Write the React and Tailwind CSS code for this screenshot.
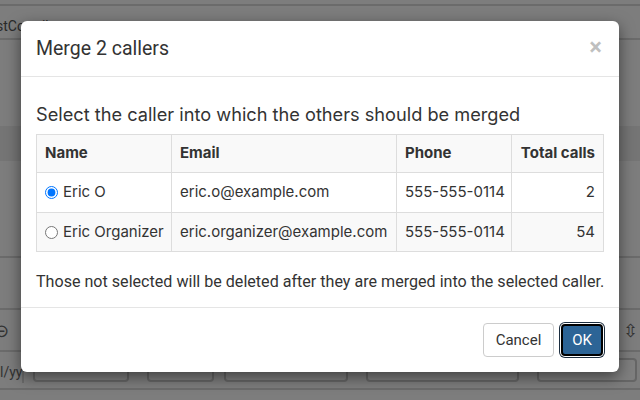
import React, { useState } from "react";

const callers = [
  { id: 1, name: "Eric O", email: "eric.o@example.com", phone: "555-555-0114", calls: 2 },
  { id: 2, name: "Eric Organizer", email: "eric.organizer@example.com", phone: "555-555-0114", calls: 54 },
];

const inter = "font-['Inter','Liberation_Sans',sans-serif]";
const roboto = "font-['Roboto','Liberation_Sans',sans-serif]";

function BackgroundPage() {
  // the page behind the dialog, mostly hidden by the overlay
  return (
    <div className={`flex h-full w-full flex-col bg-[#fafafa] text-[14px] text-[#555] ${roboto}`}>
      <div className="h-[6px] border-b-2 border-[#d6d6d6]" />
      <div className="h-[34px] border-b-2 border-[#d6d6d6] pt-[10px]">
        <span className="-ml-[4px] leading-[18px]">stContributor</span>
      </div>
      <div className="h-[86px]" />
      <div className="h-[35px] bg-[#eaeaea]" />
      <div className="h-[95px]" />
      <div className="h-[52px] border-t-2 border-[#d6d6d6]" />
      <div className="flex h-[42px] items-center border-t-2 border-[#d6d6d6]">
        <span className="-ml-[6px] text-[18px] text-[#666]">⊝</span>
        <span className="ml-auto mr-[2px] text-[18px] text-[#666]">⇳</span>
      </div>
      <div className="flex h-[38px] items-start border-t-2 border-[#d6d6d6] pt-[6px]">
        <span className="w-[24px] overflow-hidden whitespace-nowrap border-r-2 border-[#d6d6d6] pt-[4px] text-[#666]">l/yy</span>
        <div className="ml-[9px] h-[24px] w-[96px] rounded border-2 border-[#ccc] bg-white" />
        <div className="ml-[18px] h-[24px] w-[67px] rounded border-2 border-[#ccc] bg-white" />
        <div className="ml-[10px] h-[24px] w-[124px] rounded border-2 border-[#ccc] bg-white" />
        <div className="ml-[18px] h-[24px] w-[153px] rounded border-2 border-[#ccc] bg-white" />
        <div className="ml-[18px] h-[24px] w-[100px] rounded border-2 border-[#ccc] bg-white" />
      </div>
      <div className="flex-1 border-t-2 border-[#d6d6d6]" />
    </div>
  );
}

export default function App() {
  const [selected, setSelected] = useState(1);

  return (
    <div className="relative h-[400px] w-[640px] overflow-hidden">
      <BackgroundPage />
      <div className="absolute inset-0 bg-black/50" />

      <div className="absolute left-[21px] top-[21px] w-[598px] rounded-[6px] bg-white text-[#333] shadow-[0_5px_15px_rgba(0,0,0,0.5)]">
        <div className="flex h-[56px] items-center justify-between border-b border-[#e5e5e5] pl-[15px] pr-[17px]">
          <h4 className={`text-[19.5px] leading-[26px] ${roboto}`}>Merge 2 callers</h4>
          <button className={`-mt-[4px] text-[24px] font-bold leading-none text-black/25 ${roboto}`}>×</button>
        </div>

        <div className="px-[15px] pb-[15px] pt-[15px]">
          <h3 className={`mb-[10px] mt-[12px] whitespace-nowrap text-[18.2px] leading-[20px] ${inter}`}>
            Select the caller into which the others should be merged
          </h3>

          <table className={`w-[567px] table-fixed border-collapse whitespace-nowrap text-[15px] ${inter}`}>
            <thead>
              <tr className="h-[38px] bg-[#f9f9f9]">
                <th className="w-[135px] border border-[#ddd] px-[8px] text-left font-bold">Name</th>
                <th className="w-[225px] border border-[#ddd] px-[8px] text-left font-bold">Email</th>
                <th className="w-[115px] border border-[#ddd] px-[8px] text-left font-bold">Phone</th>
                <th className="w-[92px] border border-[#ddd] px-[8px] text-right font-bold">Total calls</th>
              </tr>
            </thead>
            <tbody>
              {callers.map((c, i) => (
                <tr key={c.id} className={i % 2 === 1 ? "h-[39px] bg-[#f9f9f9]" : "h-[40px] bg-white"}>
                  <td className="border border-[#ddd] px-[8px]">
                    <label className="flex items-center gap-[5px]">
                      <input
                        type="radio"
                        name="caller"
                        className="m-0 h-[13px] w-[13px] shrink-0"
                        checked={selected === c.id}
                        onChange={() => setSelected(c.id)}
                      />
                      <span>{c.name}</span>
                    </label>
                  </td>
                  <td className="border border-[#ddd] px-[8px]">{c.email}</td>
                  <td className="border border-[#ddd] px-[8px]">{c.phone}</td>
                  <td className="border border-[#ddd] px-[8px] text-right">{c.calls}</td>
                </tr>
              ))}
            </tbody>
          </table>

          <p className={`mt-[20px] whitespace-nowrap text-[16.1px] leading-[20px] ${roboto}`}>
            Those not selected will be deleted after they are merged into the selected caller.
          </p>
        </div>

        <div className={`flex justify-end gap-[7px] border-t border-[#e5e5e5] px-[16px] py-[15px] ${roboto}`}>
          <button className="h-[34px] w-[71px] rounded-[4px] border border-[#ccc] bg-white text-[15px] text-[#333]">
            Cancel
          </button>
          <button className="mt-[1px] h-[32px] w-[42px] rounded-[4px] border-2 border-black bg-[#2c6496] text-[15px] text-white shadow-[0_0_0_1px_#ffffff,0_0_0_2px_#1c2e40]">
            OK
          </button>
        </div>
      </div>
    </div>
  );
}
